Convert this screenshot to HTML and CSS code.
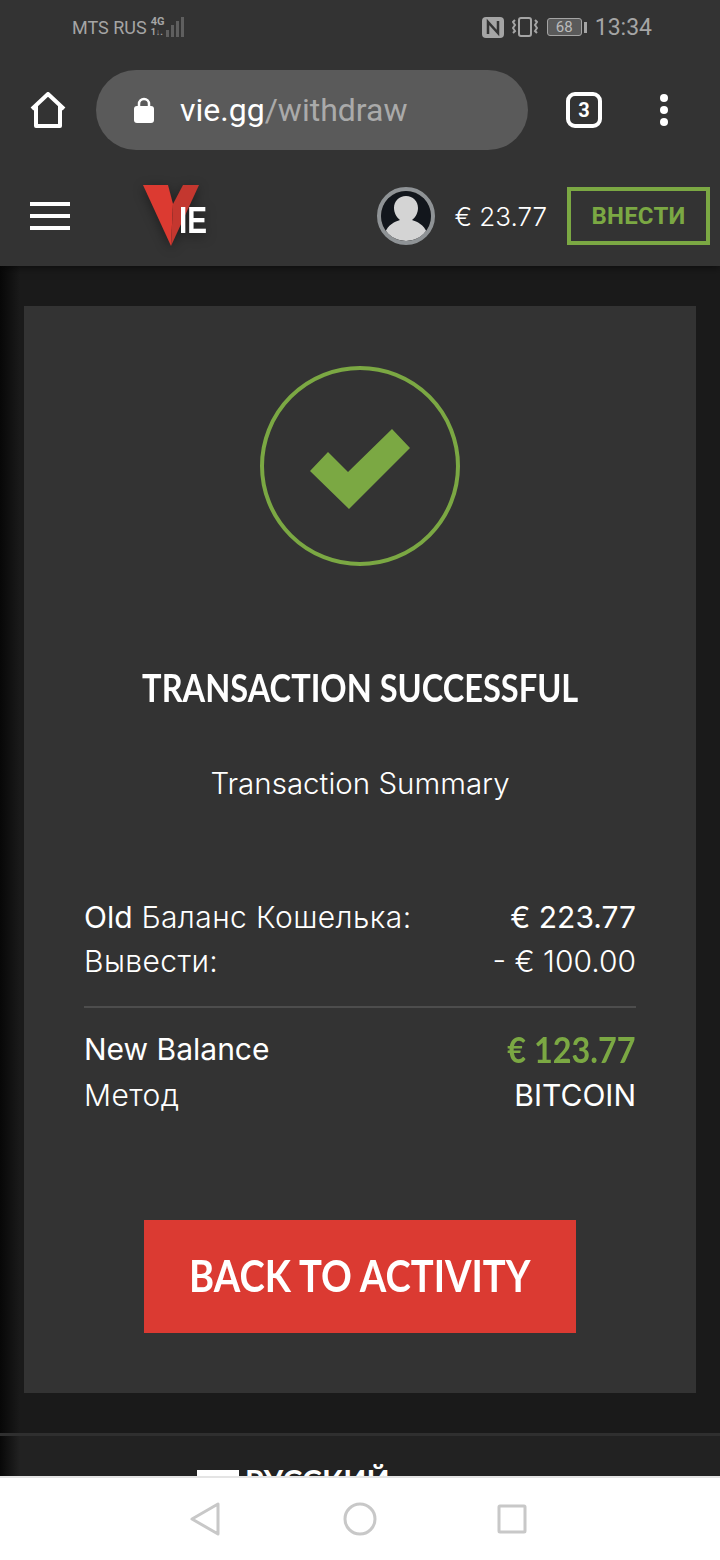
FILE: index.html
```html
<!DOCTYPE html>
<html lang="en">
<head>
    <meta charset="UTF-8">
    <meta name="viewport" content="width=device-width, initial-scale=1.0">
    <title>Withdraw - VIE</title>
    <link rel="stylesheet" href="styles.css">
</head>
<body>
    <div class="status-bar">
        <div class="status-left">
            <span class="carrier">MTS RUS</span>
            <span class="network">
                <span class="network-type">4G</span>
                <span class="network-arrows">1↓.</span>
            </span>
            <svg class="signal" width="18" height="22" viewBox="0 0 18 22" fill="#5f5f5f">
                <rect x="0" y="14" width="3" height="7"/>
                <rect x="5" y="9" width="3" height="12"/>
                <rect x="10" y="5" width="3" height="16"/>
                <rect x="15" y="1" width="3" height="20"/>
            </svg>
        </div>
        <div class="status-right">
            <svg class="nfc" width="22" height="21" viewBox="0 0 22 21">
                <rect width="22" height="21" rx="4" fill="#a5a5a5"/>
                <path d="M6 17V5l10 11V4" fill="none" stroke="#333" stroke-width="2.5"/>
            </svg>
            <svg class="vibrate" width="26" height="20" viewBox="0 0 26 20" fill="none" stroke="#a5a5a5" stroke-width="2">
                <rect x="7" y="1" width="12" height="18" rx="2"/>
                <path d="M3 3L1 5l2 3-2 3 2 3-2 2M23 3l2 2-2 3 2 3-2 3 2 2"/>
            </svg>
            <span class="battery"><span class="battery-level">68</span></span>
            <span class="battery-tip"></span>
            <span class="clock">13:34</span>
        </div>
    </div>

    <div class="browser-bar">
        <svg class="home-icon" width="36" height="36" viewBox="0 0 36 36" fill="none" stroke="white" stroke-width="4" stroke-linejoin="round">
            <path d="M2 17L18 2l16 15M6 14v20h24V14"/>
        </svg>
        <div class="url-bar">
            <svg width="20" height="26" viewBox="0 0 20 26">
                <path d="M5 10V7a5 5 0 0 1 10 0v3" fill="none" stroke="white" stroke-width="2.5"/>
                <rect y="9" width="20" height="17" rx="3" fill="white"/>
            </svg>
            <span class="url"><span class="url-host">vie.gg</span>/withdraw</span>
        </div>
        <div class="tab-count">3</div>
        <div class="menu-dots"><span></span><span></span><span></span></div>
    </div>

    <header class="site-header">
        <div class="hamburger"><span></span><span></span><span></span></div>
        <svg class="logo" width="70" height="64" viewBox="0 0 70 64">
            <polygon points="0,1 25,1 30,20 28,62" fill="#dc3a31"/>
            <polygon points="30,20 40,1 56,1 28,62" fill="#c4372f"/>
            <text class="logo-text" x="36" y="49" textLength="28" lengthAdjust="spacingAndGlyphs">IE</text>
        </svg>
        <div class="header-right">
            <div class="avatar">
                <svg width="50" height="50" viewBox="0 0 50 50">
                    <circle cx="25" cy="25" r="25" fill="#12161c"/>
                    <path d="M4 42c3-9 10-11 15-13-4-3-6-8-6-12 0-7 5-12 12-12s12 5 12 12c0 4-2 9-6 12 5 2 12 4 15 13-5 5-13 8-21 8S9 47 4 42z" fill="#d4d4d4"/>
                </svg>
            </div>
            <span class="balance">€ 23.77</span>
            <a class="deposit-btn">ВНЕСТИ</a>
        </div>
    </header>

    <main class="page">
        <section class="card">
            <svg class="check-circle" width="200" height="200" viewBox="0 0 200 200">
                <circle cx="100" cy="100" r="98" fill="none" stroke="#7ba843" stroke-width="4"/>
                <polygon points="50,105 68,86 88,106 132,63 150,82 89,143" fill="#7ba843"/>
            </svg>
            <h1 class="title">TRANSACTION SUCCESSFUL</h1>
            <p class="subtitle">Transaction Summary</p>

            <div class="summary">
                <div class="row"><span class="ru"><span class="strong">Old</span> Баланс Кошелька:</span><span class="strong">€ 223.77</span></div>
                <div class="row"><span class="ru">Вывести:</span><span>- € 100.00</span></div>
                <div class="divider"></div>
                <div class="row row-total"><span class="strong">New Balance</span><span class="new-balance">€ 123.77</span></div>
                <div class="row"><span class="ru">Метод</span><span class="strong">BITCOIN</span></div>
            </div>

            <a class="back-btn"><span class="back-label">BACK TO ACTIVITY</span></a>
        </section>
    </main>

    <footer class="site-footer">
        <span class="flag"></span>
        <span class="language">РУССКИЙ</span>
    </footer>

    <nav class="nav-bar">
        <svg width="30" height="34" viewBox="0 0 30 34" fill="none" stroke="#c8c8c8" stroke-width="3" stroke-linejoin="round">
            <path d="M28 2v30L2 17z"/>
        </svg>
        <svg width="34" height="34" viewBox="0 0 34 34" fill="none" stroke="#c8c8c8" stroke-width="3">
            <circle cx="17" cy="17" r="15"/>
        </svg>
        <svg class="nav-square" width="30" height="30" viewBox="0 0 30 30" fill="none" stroke="#c8c8c8" stroke-width="3" stroke-linejoin="round">
            <rect x="2" y="2" width="26" height="26" rx="1"/>
        </svg>
    </nav>
</body>
</html>
```

FILE: styles.css
```css
* {
    margin: 0;
    padding: 0;
    box-sizing: border-box;
}

body {
    width: 720px;
    height: 1560px;
    overflow: hidden;
    display: flex;
    flex-direction: column;
    font-family: 'Inter', 'Open Sans', sans-serif;
    background: #333;
    color: white;
}

/* phone status bar */
.status-bar {
    height: 54px;
    flex: none;
    display: flex;
    align-items: center;
    justify-content: space-between;
    padding: 0 68px 0 72px;
    font-family: 'Roboto', sans-serif;
    color: #a5a5a5;
}

.status-left,
.status-right {
    display: flex;
    align-items: center;
}

.carrier {
    font-size: 18px;
}

.network {
    display: flex;
    flex-direction: column;
    margin-left: 4px;
    font-size: 11px;
    font-weight: 700;
    line-height: 11px;
}

.network-arrows {
    font-size: 9px;
}

.signal {
    margin-left: 2px;
}

.nfc {
    margin-right: 8px;
}

.vibrate {
    margin-right: 9px;
}

.battery {
    width: 35px;
    height: 18px;
    border: 1px solid #a5a5a5;
    border-radius: 3px;
    background: #5a5a5a;
    display: flex;
    align-items: center;
    justify-content: center;
}

.battery-level {
    font-size: 15px;
    color: #bbb;
}

.battery-tip {
    width: 3px;
    height: 11px;
    margin-left: 2px;
    background: #a5a5a5;
}

.clock {
    font-size: 23px;
    margin-left: 8px;
}

/* browser toolbar */
.browser-bar {
    height: 112px;
    flex: none;
    display: flex;
    align-items: center;
    padding: 0 52px 0 30px;
}

.home-icon {
    flex: none;
}

.url-bar {
    width: 432px;
    height: 80px;
    margin-left: 30px;
    padding-left: 38px;
    display: flex;
    align-items: center;
    gap: 26px;
    border-radius: 40px;
    background: #5a5a5a;
}

.url {
    font-family: 'Roboto', sans-serif;
    font-size: 32px;
    color: #aaa;
}

.url-host {
    color: white;
}

.tab-count {
    width: 36px;
    height: 36px;
    margin-left: 38px;
    display: flex;
    align-items: center;
    justify-content: center;
    border: 4px solid white;
    border-radius: 9px;
    font-family: 'Roboto', sans-serif;
    font-size: 20px;
    font-weight: 700;
}

.menu-dots {
    margin-left: 58px;
    display: flex;
    flex-direction: column;
    gap: 4px;
}

.menu-dots span {
    width: 8px;
    height: 8px;
    border-radius: 50%;
    background: white;
}

/* site header */
.site-header {
    height: 100px;
    flex: none;
    position: relative;
    z-index: 1;
    display: flex;
    align-items: center;
    padding: 0 10px 0 30px;
    background: #333;
    box-shadow: 0 2px 8px rgba(0, 0, 0, 0.5);
    clip-path: inset(0 0 -20px 0);
}

.hamburger {
    width: 40px;
    display: flex;
    flex-direction: column;
    gap: 8px;
}

.hamburger span {
    height: 4px;
    background: white;
}

.logo {
    margin-left: 73px;
    filter: drop-shadow(0 3px 6px rgba(0, 0, 0, 0.4));
}

.logo-text {
    font-family: 'Liberation Sans', sans-serif;
    font-size: 37px;
    font-weight: 700;
    fill: white;
}

.header-right {
    margin-left: auto;
    display: flex;
    align-items: center;
}

.avatar {
    width: 58px;
    height: 58px;
    border: 4px solid #8f9396;
    border-radius: 50%;
    overflow: hidden;
}

.balance {
    width: 112px;
    text-align: right;
    font-size: 26px;
    font-weight: 300;
}

.deposit-btn {
    width: 143px;
    height: 58px;
    margin-left: 20px;
    display: flex;
    align-items: center;
    justify-content: center;
    border: 4px solid #7ba843;
    font-family: 'Roboto', sans-serif;
    font-size: 24px;
    font-weight: 700;
    letter-spacing: 0.2px;
    color: #7ba843;
}

/* withdraw result */
.page {
    flex: none;
    padding: 40px 24px;
    background: linear-gradient(90deg, #070707, #1a1a1a 20px);
}

.card {
    height: 1087px;
    padding: 60px 60px;
    display: flex;
    flex-direction: column;
    align-items: center;
    background: #333;
}

.check-circle {
    flex: none;
}

/* no condensed bold installed, so the wide ones get squeezed */
.title {
    margin-top: 99px;
    font-family: 'Lato', sans-serif;
    font-size: 39px;
    font-weight: 700;
    line-height: 44px;
    white-space: nowrap;
    transform: scaleX(0.835);
}

.subtitle {
    margin-top: 54px;
    font-size: 29.5px;
    font-weight: 300;
    line-height: 40px;
}

.summary {
    width: 552px;
    margin-top: 92px;
    font-size: 30px;
    font-weight: 300;
}

.row {
    height: 44px;
    display: flex;
    align-items: center;
    justify-content: space-between;
}

.row-total {
    height: 48px;
}

.ru {
    letter-spacing: 0.4px;
}

.strong {
    font-weight: 400;
    letter-spacing: 0;
}

.divider {
    height: 2px;
    margin: 23px 0 17px;
    background: #4d4d4d;
}

.new-balance {
    font-family: 'Lato', sans-serif;
    font-size: 36px;
    font-weight: 700;
    color: #7ba843;
    transform: scaleX(0.9);
    transform-origin: right center;
}

.back-btn {
    width: 432px;
    height: 113px;
    margin-top: auto;
    padding-bottom: 4px;
    display: flex;
    align-items: center;
    justify-content: center;
    background: #db3a32;
    font-family: 'Lato', sans-serif;
    font-size: 44px;
    font-weight: 700;
}

.back-label {
    white-space: nowrap;
    transform: scaleX(0.868);
}

/* language footer, cut off by the nav bar */
.site-footer {
    flex: 1;
    min-height: 0;
    overflow: hidden;
    padding: 34px 0 0 197px;
    display: flex;
    align-items: flex-start;
    gap: 6px;
    border-top: 3px solid #2f2f2f;
    background: linear-gradient(90deg, #080808, #222 20px);
}

.flag {
    width: 42px;
    height: 28px;
    background: white;
}

.language {
    margin-top: -8px;
    font-family: 'Lato', sans-serif;
    font-size: 30px;
    font-weight: 700;
    letter-spacing: 0.2px;
}

/* phone navigation */
.nav-bar {
    height: 84px;
    flex: none;
    display: flex;
    align-items: center;
    gap: 123px;
    padding-left: 190px;
    border-top: 2px solid #e4e4e4;
    background: white;
}

.nav-square {
    margin-left: -3px;
}
```
